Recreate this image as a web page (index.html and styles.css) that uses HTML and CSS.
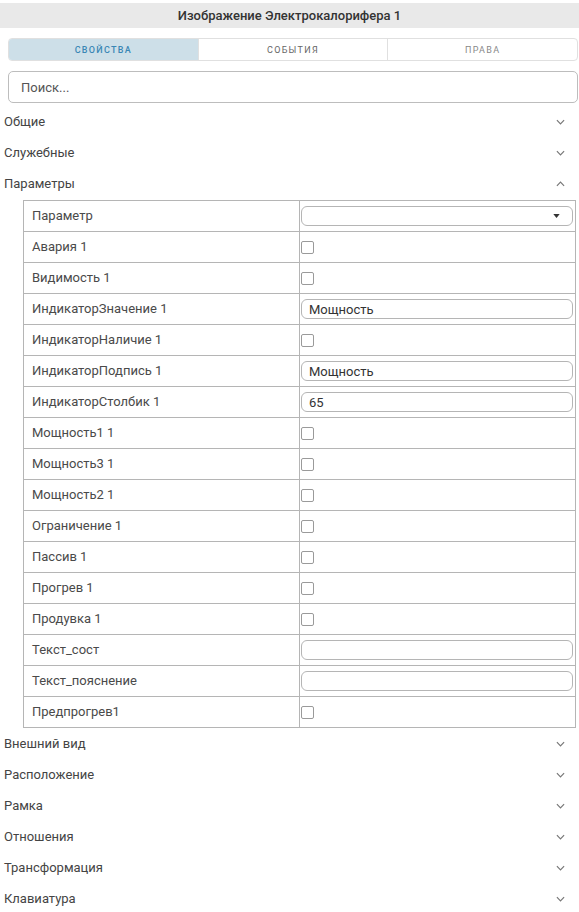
FILE: index.html
```html
<!DOCTYPE html>
<html lang="ru">
<head>
<meta charset="utf-8">
<link rel="stylesheet" href="styles.css">
</head>
<body>
<div class="panel">
  <div class="title">Изображение Электрокалорифера 1</div>
  <div class="tabs">
    <div class="tab active">Свойства</div>
    <div class="tab">События</div>
    <div class="tab muted">Права</div>
  </div>
  <div class="search">Поиск...</div>

  <div class="section"><span>Общие</span><svg class="chev" viewBox="0 0 10 6"><path d="M1 1l4 4 4-4"/></svg></div>
  <div class="section"><span>Служебные</span><svg class="chev" viewBox="0 0 10 6"><path d="M1 1l4 4 4-4"/></svg></div>
  <div class="section"><span>Параметры</span><svg class="chev" viewBox="0 0 10 6"><path d="M1 5l4-4 4 4"/></svg></div>

  <div class="grid">
    <div class="row"><div class="lbl">Параметр</div><div class="val"><div class="field select"><svg class="caret" viewBox="0 0 8 5"><path d="M0 0h8L4 5z"/></svg></div></div></div>
    <div class="row"><div class="lbl">Авария 1</div><div class="val"><div class="cb"></div></div></div>
    <div class="row"><div class="lbl">Видимость 1</div><div class="val"><div class="cb"></div></div></div>
    <div class="row"><div class="lbl">ИндикаторЗначение 1</div><div class="val"><div class="field">Мощность</div></div></div>
    <div class="row"><div class="lbl">ИндикаторНаличие 1</div><div class="val"><div class="cb"></div></div></div>
    <div class="row"><div class="lbl">ИндикаторПодпись 1</div><div class="val"><div class="field">Мощность</div></div></div>
    <div class="row"><div class="lbl">ИндикаторСтолбик 1</div><div class="val"><div class="field">65</div></div></div>
    <div class="row"><div class="lbl">Мощность1 1</div><div class="val"><div class="cb"></div></div></div>
    <div class="row"><div class="lbl">Мощность3 1</div><div class="val"><div class="cb"></div></div></div>
    <div class="row"><div class="lbl">Мощность2 1</div><div class="val"><div class="cb"></div></div></div>
    <div class="row"><div class="lbl">Ограничение 1</div><div class="val"><div class="cb"></div></div></div>
    <div class="row"><div class="lbl">Пассив 1</div><div class="val"><div class="cb"></div></div></div>
    <div class="row"><div class="lbl">Прогрев 1</div><div class="val"><div class="cb"></div></div></div>
    <div class="row"><div class="lbl">Продувка 1</div><div class="val"><div class="cb"></div></div></div>
    <div class="row"><div class="lbl">Текст_сост</div><div class="val"><div class="field"></div></div></div>
    <div class="row"><div class="lbl">Текст_пояснение</div><div class="val"><div class="field"></div></div></div>
    <div class="row"><div class="lbl">Предпрогрев1</div><div class="val"><div class="cb"></div></div></div>
  </div>

  <div class="section"><span>Внешний вид</span><svg class="chev" viewBox="0 0 10 6"><path d="M1 1l4 4 4-4"/></svg></div>
  <div class="section"><span>Расположение</span><svg class="chev" viewBox="0 0 10 6"><path d="M1 1l4 4 4-4"/></svg></div>
  <div class="section"><span>Рамка</span><svg class="chev" viewBox="0 0 10 6"><path d="M1 1l4 4 4-4"/></svg></div>
  <div class="section"><span>Отношения</span><svg class="chev" viewBox="0 0 10 6"><path d="M1 1l4 4 4-4"/></svg></div>
  <div class="section"><span>Трансформация</span><svg class="chev" viewBox="0 0 10 6"><path d="M1 1l4 4 4-4"/></svg></div>
  <div class="section"><span>Клавиатура</span><svg class="chev" viewBox="0 0 10 6"><path d="M1 1l4 4 4-4"/></svg></div>
</div>
</body>
</html>
```

FILE: styles.css
```css
html, body {
  margin: 0;
  padding: 0;
  background: #fff;
}
body {
  font-family: Roboto, "Noto Sans", sans-serif;
  color: #444;
  font-size: 13px;
}
.panel {
  width: 579px;
  padding-top: 3px;
}
.title {
  height: 25px;
  line-height: 26px;
  background: #e9e9e9;
  text-align: center;
  font-size: 13px;
  font-weight: 500;
  color: #333;
}
.tabs {
  display: flex;
  margin: 10px 1px 0 8px;
  height: 23px;
  border: 1px solid #e0e0e0;
  border-radius: 4px;
  overflow: hidden;
  box-sizing: border-box;
}
.tab {
  flex: 1;
  display: flex;
  align-items: center;
  justify-content: center;
  text-transform: uppercase;
  font-size: 9px;
  letter-spacing: 1.3px;
  color: #666;
  border-left: 1px solid #e0e0e0;
}
.tab:first-child { border-left: none; }
.tab.active {
  background: #cddfe8;
  color: #3a87b5;
  font-weight: 500;
}
.tab.muted { color: #888; }
.search {
  margin: 10px 1px 0 8px;
  height: 32px;
  box-sizing: border-box;
  border: 1px solid #bdbdbd;
  border-radius: 5px;
  padding-left: 12px;
  display: flex;
  align-items: center;
  color: #555;
  font-size: 13px;
}
.section {
  display: flex;
  align-items: center;
  justify-content: space-between;
  height: 31px;
  padding: 0 14px 0 4px;
  color: #444;
}
.section span { padding-bottom: 1px; }
.search + .section { margin-top: 3px; }
.chev {
  width: 9px;
  height: 6px;
  fill: none;
  stroke: #777;
  stroke-width: 1.3;
}
.grid {
  margin: 1px 3px 0 23px;
  border: 1px solid #b5b5b5;
  border-bottom: none;
}
.row {
  display: grid;
  grid-template-columns: 276px 1fr;
  height: 31px;
  border-bottom: 1px solid #b5b5b5;
  box-sizing: border-box;
}
.lbl {
  display: flex;
  align-items: center;
  padding: 0 0 2px 8px;
  color: #4a4a4a;
  border-right: 1px solid #b5b5b5;
}
.val {
  display: flex;
  align-items: center;
  padding: 0 2px 0 1px;
}
.field {
  flex: 1;
  height: 20px;
  box-sizing: border-box;
  border: 1px solid #b5b5b5;
  border-radius: 6px;
  padding-left: 7px;
  display: flex;
  align-items: center;
  color: #333;
}
.select {
  justify-content: flex-end;
  padding-right: 12px;
}
.caret {
  width: 7px;
  height: 4px;
  fill: #333;
}
.cb {
  width: 13px;
  height: 13px;
  box-sizing: border-box;
  border: 1.5px solid #9a9a9a;
  border-radius: 2px;
}
```
